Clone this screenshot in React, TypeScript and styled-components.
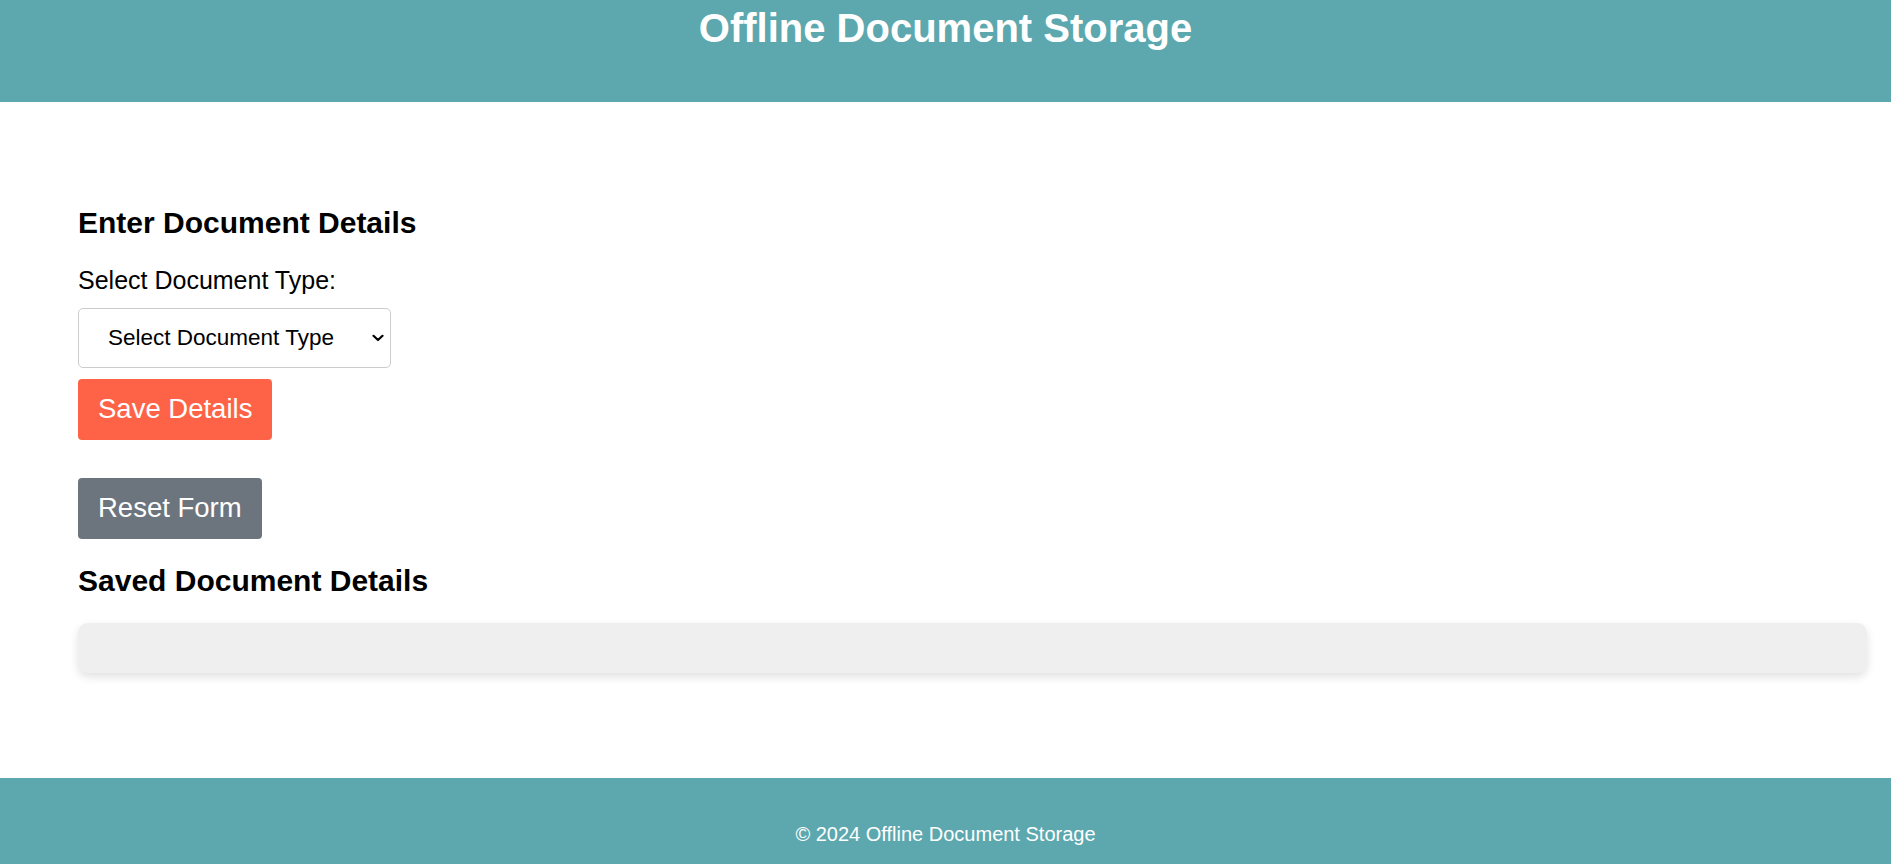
import React from "react";
import styled, { createGlobalStyle } from "styled-components";

const GlobalStyle = createGlobalStyle`
  html, body {
    margin: 0;
    padding: 0;
    background: #ffffff;
    font-family: "Liberation Sans", Arial, sans-serif;
    color: #000;
  }
  * { box-sizing: border-box; }
`;

const Page = styled.div`
  display: flex;
  flex-direction: column;
  min-height: 100vh;
`;

const Header = styled.header`
  background: #5ca8ae;
  color: #fff;
  height: 102px;
  padding: 5px 0 0;
  text-align: center;
`;

const Title = styled.h1`
  margin: 0;
  font-size: 40px;
  font-weight: 700;
  line-height: 46px;
`;

const Main = styled.main`
  padding: 79px 24px 105px 78px;
`;

const SectionTitle = styled.h2`
  margin: 25px 0;
  font-size: 30px;
  font-weight: 700;
  line-height: 34.5px;
`;

const Label = styled.label`
  display: block;
  font-size: 25px;
  line-height: 29px;
  margin-bottom: 13px;
`;

const SelectWrap = styled.div`
  position: relative;
  width: 313px;
  margin-bottom: 11px;
`;

const Select = styled.select`
  display: block;
  appearance: none;
  -webkit-appearance: none;
  width: 100%;
  height: 60px;
  padding: 0 40px 0 29px;
  font-family: "Liberation Sans", Arial, sans-serif;
  font-size: 22.5px;
  color: #000;
  background: #fff;
  border: 1px solid #ccc;
  border-radius: 5px;
`;

const Chevron = styled.svg`
  position: absolute;
  right: 7px;
  top: 50%;
  transform: translateY(-50%);
  width: 12px;
  height: 8px;
  pointer-events: none;
`;

const Button = styled.button<{ $variant: "save" | "reset" }>`
  display: block;
  border: none;
  border-radius: 4px;
  padding: 0 20px;
  height: 61px;
  font-family: "Liberation Sans", Arial, sans-serif;
  font-size: 27.5px;
  color: #fff;
  cursor: pointer;
  background: ${(p) => (p.$variant === "save" ? "#ff6347" : "#6c757d")};
  margin-bottom: ${(p) => (p.$variant === "save" ? "38px" : "0")};
`;

const SavedBox = styled.div`
  background: #efefef;
  border-radius: 10px;
  padding: 25px;
  box-shadow: 0 4px 10px rgba(0, 0, 0, 0.12);
`;

const Footer = styled.footer`
  background: #5ca8ae;
  color: #fff;
  text-align: center;
  padding: 25px 0;
`;

const FooterText = styled.p`
  margin: 20px 0;
  font-size: 20px;
  line-height: 23px;
`;

export default function App() {
  return (
    <Page>
      <GlobalStyle />
      <Header>
        <Title>Offline Document Storage</Title>
      </Header>
      <Main>
        <SectionTitle>Enter Document Details</SectionTitle>
        <Label htmlFor="docType">Select Document Type:</Label>
        <SelectWrap>
          <Select id="docType" defaultValue="">
            <option value="">Select Document Type</option>
            <option value="passport">Passport</option>
            <option value="license">Driver's License</option>
            <option value="id">ID Card</option>
          </Select>
          <Chevron viewBox="0 0 12 8" aria-hidden="true">
            <path d="M1.5 1.8 L6 6 L10.5 1.8" fill="none" stroke="#000" strokeWidth="2.2" strokeLinecap="round" strokeLinejoin="round" />
          </Chevron>
        </SelectWrap>
        <Button $variant="save">Save Details</Button>
        <Button $variant="reset">Reset Form</Button>
        <SectionTitle>Saved Document Details</SectionTitle>
        <SavedBox />
      </Main>
      <Footer>
        <FooterText>© 2024 Offline Document Storage</FooterText>
      </Footer>
    </Page>
  );
}
